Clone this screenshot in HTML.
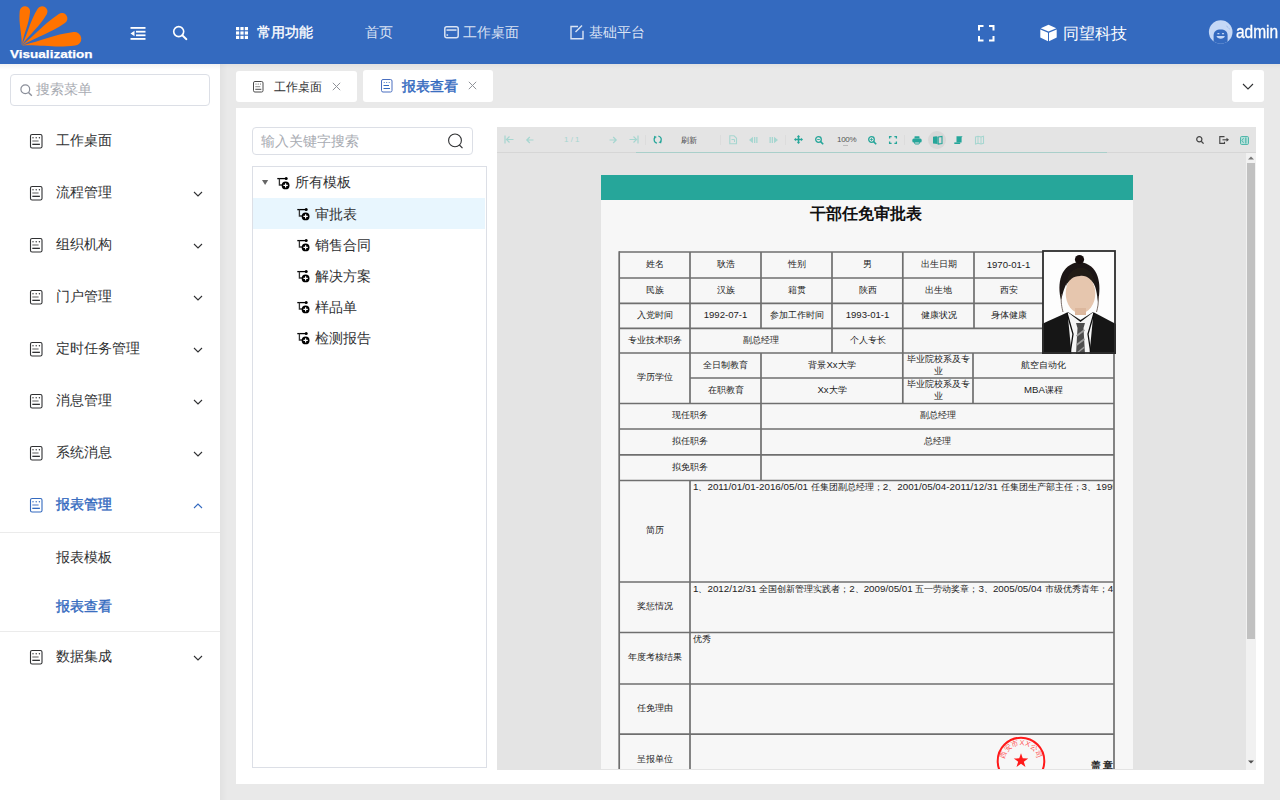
<!DOCTYPE html>
<html><head><meta charset="utf-8">
<style>
html,body{margin:0;padding:0}
body{width:1280px;height:800px;overflow:hidden;position:relative;background:#e9e9e9;font-family:"Liberation Sans",sans-serif;color:#303133}
.a{position:absolute}
.t{position:absolute;white-space:nowrap;line-height:1}
svg{position:absolute;overflow:visible}
#hdr{left:0;top:0;width:1280px;height:64px;background:#346abf}
#hdr .t{color:rgba(255,255,255,.82);font-size:14px}
#side{left:0;top:64px;width:220px;height:736px;background:#fff}
#side .mi{font-size:14px;color:#303133}
#tabs .t{font-size:13px}
#panel{left:236px;top:108px;width:1028px;height:676px;background:#fff}
</style></head><body>

<!-- HEADER -->
<div id="hdr" class="a">
<!--LOGO-->
<svg width="100" height="64" style="left:0;top:0">
  <g fill="#ff7300">
<path transform="translate(21.8 45.4) rotate(-84.79)" d="M0 0 C13.66 1.19 20.48 5.2 34.14 5.2 A5.2 5.2 0 0 0 34.14 -5.2 C20.48 -5.2 13.66 -1.19 0 0 Z"/>
<path transform="translate(21.8 45.4) rotate(-58.89)" d="M0 0 C15.79 1.38 23.69 5.3 39.48 5.3 A5.3 5.3 0 0 0 39.48 -5.3 C23.69 -5.3 15.79 -1.38 0 0 Z"/>
<path transform="translate(21.8 45.4) rotate(-33.85)" d="M0 0 C19.31 1.69 28.97 5.5 48.29 5.5 A5.5 5.5 0 0 0 48.29 -5.5 C28.97 -5.5 19.31 -1.69 0 0 Z"/>
<path transform="translate(21.8 45.4) rotate(-7.14)" d="M0 0 C21.24 1.86 31.87 6.8 53.11 6.8 A6.8 6.8 0 0 0 53.11 -6.8 C31.87 -6.8 21.24 -1.86 0 0 Z"/>
</g>
  <text x="10" y="58.4" font-family="Liberation Sans" font-weight="bold" font-size="11.8" fill="#fff" stroke="#fff" stroke-width="0.25" textLength="82.5" lengthAdjust="spacingAndGlyphs">Visualization</text>
</svg>
<!--menu fold icon-->
<svg width="16" height="14" style="left:130px;top:26px">
  <g fill="#fff">
    <rect x="0.5" y="1" width="15" height="1.8"/>
    <rect x="6" y="4.8" width="9.5" height="1.8"/>
    <rect x="6" y="8.4" width="9.5" height="1.8"/>
    <rect x="0.5" y="12" width="15" height="1.8"/>
    <path d="M0.5 7.5 L4.5 4.8 L4.5 10.2 Z"/>
  </g>
</svg>
<!--search icon-->
<svg width="16" height="16" style="left:172px;top:25px">
  <circle cx="6.7" cy="6.6" r="5" fill="none" stroke="#fff" stroke-width="1.6"/>
  <path d="M10.3 10.3 L14.4 14.2" stroke="#fff" stroke-width="1.9" stroke-linecap="round"/>
</svg>
<!--grid icon-->
<svg width="13" height="13" style="left:236px;top:27px">
  <g fill="#fff">
    <rect x="0" y="0" width="3.2" height="3.2"/><rect x="4.4" y="0" width="3.2" height="3.2"/><rect x="8.8" y="0" width="3.2" height="3.2"/>
    <rect x="0" y="4.4" width="3.2" height="3.2"/><rect x="4.4" y="4.4" width="3.2" height="3.2"/><rect x="8.8" y="4.4" width="3.2" height="3.2"/>
    <rect x="0" y="8.8" width="3.2" height="3.2"/><rect x="4.4" y="8.8" width="3.2" height="3.2"/><rect x="8.8" y="8.8" width="3.2" height="3.2"/>
  </g>
</svg>
<div class="t" style="left:257px;top:25px;color:#fff;-webkit-text-stroke:0.35px #fff">常用功能</div>
<div class="t" style="left:365px;top:25px">首页</div>
<svg width="15" height="13" style="left:444px;top:26px">
  <rect x="0.8" y="0.8" width="13.4" height="11" rx="2" fill="none" stroke="rgba(255,255,255,.82)" stroke-width="1.5"/>
  <rect x="2.5" y="3.3" width="10" height="1.5" fill="rgba(255,255,255,.82)"/>
  <rect x="2.5" y="8.3" width="1.6" height="1.5" fill="rgba(255,255,255,.82)"/>
</svg>
<div class="t" style="left:463px;top:25px">工作桌面</div>
<svg width="16" height="15" style="left:570px;top:25px">
  <path d="M8 1.5 H1 V13.8 H13 V5.8" fill="none" stroke="rgba(255,255,255,.82)" stroke-width="1.4"/>
  <path d="M5.5 7 L12 0.5" fill="none" stroke="rgba(255,255,255,.82)" stroke-width="1.4"/>
</svg>
<div class="t" style="left:589px;top:25px">基础平台</div>
<!--fullscreen-->
<svg width="17" height="17" style="left:978px;top:25px">
  <g fill="none" stroke="#fff" stroke-width="2">
    <path d="M1 5.5 V1 H5.5"/><path d="M11 1 H15.5 V5.5"/><path d="M15.5 11 V15.5 H11"/><path d="M5.5 15.5 H1 V11"/>
  </g>
</svg>
<!--cube-->
<svg width="18" height="18" style="left:1040px;top:24px">
  <path d="M8.5 0.8 L16.3 4.2 L8.5 7.6 L0.7 4.2 Z" fill="#fff"/>
  <path d="M0.3 5.4 L8 8.8 L8 17.2 L0.3 13.4 Z" fill="#fff"/>
  <path d="M16.7 5.4 L9 8.8 L9 17.2 L16.7 13.4 Z" fill="#fff"/>
</svg>
<div class="t" style="left:1063px;top:26px;font-size:16px;color:#fff">同望科技</div>
<!--avatar-->
<svg width="26" height="26" style="left:1208px;top:20px">
  <defs><clipPath id="avc"><circle cx="12.7" cy="12" r="11.8"/></clipPath></defs>
  <circle cx="12.7" cy="12" r="11.8" fill="#c5d8f6"/>
  <g clip-path="url(#avc)">
  <path d="M5.6 26 V15.5 C5.6 11.5 8.5 9.6 12.6 9.6 C16.7 9.6 19.6 11.5 19.6 15.5 V26 Z" fill="#346abf"/>
  </g>
  <rect x="9.3" y="13" width="2.2" height="1.3" rx=".6" fill="#c5d8f6"/>
  <rect x="13.9" y="13" width="2.2" height="1.3" rx=".6" fill="#c5d8f6"/>
  <path d="M8.5 16 C9.3 19.6 16.1 19.6 16.9 16 Z" fill="#c5d8f6"/>
  <path d="M18.6 6.2 L19.8 7.2 M20.6 8.2 L21.6 9" stroke="#8fb0e6" stroke-width="1"/>
</svg>
<div class="t" style="left:1236px;top:23px;font-size:18px;color:#fff;-webkit-text-stroke:0.3px #fff;transform:scaleX(.86);transform-origin:0 0">admin</div>
</div>

<!-- SIDEBAR -->
<div id="side" class="a"></div>
<div class="a" style="left:0;top:64px;width:220px;height:6px;background:linear-gradient(rgba(0,0,0,.05),rgba(0,0,0,0))"></div>
<div class="a" style="left:10px;top:74px;width:198px;height:30px;border:1px solid #dcdfe6;border-radius:4px;background:#fff"></div>
<svg width="13" height="13" style="left:20px;top:84px"><circle cx="5.3" cy="5.3" r="4.4" fill="none" stroke="#8a8e99" stroke-width="1.2"/><path d="M8.5 8.5 L11.8 11.8" stroke="#8a8e99" stroke-width="1.4"/></svg>
<div class="t" style="left:36px;top:82px;font-size:14px;color:#a8abb2">搜索菜单</div>
<svg width="13" height="15" style="left:30px;top:134px"><rect x="0.5" y="0.5" width="11.5" height="13.5" rx="1.6" fill="none" stroke="#303133" stroke-width="1.1"/><g fill="#303133"><circle cx="3" cy="3.8" r=".7"/><circle cx="6.2" cy="3.8" r=".7"/><circle cx="9.4" cy="3.8" r=".7"/></g><rect x="2.3" y="6.3" width="6.3" height="1.4" fill="#8a8a8a"/><rect x="2.3" y="9.7" width="7.6" height="1.3" fill="#303133"/></svg>
<div class="t" style="left:56px;top:133px;font-size:14px;color:#303133">工作桌面</div>
<svg width="13" height="15" style="left:30px;top:186px"><rect x="0.5" y="0.5" width="11.5" height="13.5" rx="1.6" fill="none" stroke="#303133" stroke-width="1.1"/><g fill="#303133"><circle cx="3" cy="3.8" r=".7"/><circle cx="6.2" cy="3.8" r=".7"/><circle cx="9.4" cy="3.8" r=".7"/></g><rect x="2.3" y="6.3" width="6.3" height="1.4" fill="#8a8a8a"/><rect x="2.3" y="9.7" width="7.6" height="1.3" fill="#303133"/></svg>
<div class="t" style="left:56px;top:185px;font-size:14px;color:#303133">流程管理</div>
<svg width="10" height="6" style="left:193px;top:191px"><path d="M1 1 L5 5 L9 1" fill="none" stroke="#303133" stroke-width="1.1"/></svg>
<svg width="13" height="15" style="left:30px;top:238px"><rect x="0.5" y="0.5" width="11.5" height="13.5" rx="1.6" fill="none" stroke="#303133" stroke-width="1.1"/><g fill="#303133"><circle cx="3" cy="3.8" r=".7"/><circle cx="6.2" cy="3.8" r=".7"/><circle cx="9.4" cy="3.8" r=".7"/></g><rect x="2.3" y="6.3" width="6.3" height="1.4" fill="#8a8a8a"/><rect x="2.3" y="9.7" width="7.6" height="1.3" fill="#303133"/></svg>
<div class="t" style="left:56px;top:237px;font-size:14px;color:#303133">组织机构</div>
<svg width="10" height="6" style="left:193px;top:243px"><path d="M1 1 L5 5 L9 1" fill="none" stroke="#303133" stroke-width="1.1"/></svg>
<svg width="13" height="15" style="left:30px;top:290px"><rect x="0.5" y="0.5" width="11.5" height="13.5" rx="1.6" fill="none" stroke="#303133" stroke-width="1.1"/><g fill="#303133"><circle cx="3" cy="3.8" r=".7"/><circle cx="6.2" cy="3.8" r=".7"/><circle cx="9.4" cy="3.8" r=".7"/></g><rect x="2.3" y="6.3" width="6.3" height="1.4" fill="#8a8a8a"/><rect x="2.3" y="9.7" width="7.6" height="1.3" fill="#303133"/></svg>
<div class="t" style="left:56px;top:289px;font-size:14px;color:#303133">门户管理</div>
<svg width="10" height="6" style="left:193px;top:295px"><path d="M1 1 L5 5 L9 1" fill="none" stroke="#303133" stroke-width="1.1"/></svg>
<svg width="13" height="15" style="left:30px;top:342px"><rect x="0.5" y="0.5" width="11.5" height="13.5" rx="1.6" fill="none" stroke="#303133" stroke-width="1.1"/><g fill="#303133"><circle cx="3" cy="3.8" r=".7"/><circle cx="6.2" cy="3.8" r=".7"/><circle cx="9.4" cy="3.8" r=".7"/></g><rect x="2.3" y="6.3" width="6.3" height="1.4" fill="#8a8a8a"/><rect x="2.3" y="9.7" width="7.6" height="1.3" fill="#303133"/></svg>
<div class="t" style="left:56px;top:341px;font-size:14px;color:#303133">定时任务管理</div>
<svg width="10" height="6" style="left:193px;top:347px"><path d="M1 1 L5 5 L9 1" fill="none" stroke="#303133" stroke-width="1.1"/></svg>
<svg width="13" height="15" style="left:30px;top:394px"><rect x="0.5" y="0.5" width="11.5" height="13.5" rx="1.6" fill="none" stroke="#303133" stroke-width="1.1"/><g fill="#303133"><circle cx="3" cy="3.8" r=".7"/><circle cx="6.2" cy="3.8" r=".7"/><circle cx="9.4" cy="3.8" r=".7"/></g><rect x="2.3" y="6.3" width="6.3" height="1.4" fill="#8a8a8a"/><rect x="2.3" y="9.7" width="7.6" height="1.3" fill="#303133"/></svg>
<div class="t" style="left:56px;top:393px;font-size:14px;color:#303133">消息管理</div>
<svg width="10" height="6" style="left:193px;top:399px"><path d="M1 1 L5 5 L9 1" fill="none" stroke="#303133" stroke-width="1.1"/></svg>
<svg width="13" height="15" style="left:30px;top:446px"><rect x="0.5" y="0.5" width="11.5" height="13.5" rx="1.6" fill="none" stroke="#303133" stroke-width="1.1"/><g fill="#303133"><circle cx="3" cy="3.8" r=".7"/><circle cx="6.2" cy="3.8" r=".7"/><circle cx="9.4" cy="3.8" r=".7"/></g><rect x="2.3" y="6.3" width="6.3" height="1.4" fill="#8a8a8a"/><rect x="2.3" y="9.7" width="7.6" height="1.3" fill="#303133"/></svg>
<div class="t" style="left:56px;top:445px;font-size:14px;color:#303133">系统消息</div>
<svg width="10" height="6" style="left:193px;top:451px"><path d="M1 1 L5 5 L9 1" fill="none" stroke="#303133" stroke-width="1.1"/></svg>
<svg width="13" height="15" style="left:30px;top:498px"><rect x="0.5" y="0.5" width="11.5" height="13.5" rx="1.6" fill="none" stroke="#346abf" stroke-width="1.1"/><g fill="#346abf"><circle cx="3" cy="3.8" r=".7"/><circle cx="6.2" cy="3.8" r=".7"/><circle cx="9.4" cy="3.8" r=".7"/></g><rect x="2.3" y="6.3" width="6.3" height="1.4" fill="#7f9fd8"/><rect x="2.3" y="9.7" width="7.6" height="1.3" fill="#346abf"/></svg>
<div class="t" style="left:56px;top:497px;font-size:14px;color:#346abf;-webkit-text-stroke:0.4px #346abf">报表管理</div>
<svg width="10" height="6" style="left:193px;top:503px"><path d="M1 5 L5 1 L9 5" fill="none" stroke="#346abf" stroke-width="1.1"/></svg>
<div class="a" style="left:0;top:532px;width:220px;height:1px;background:#ebebeb"></div>
<div class="a" style="left:0;top:631px;width:220px;height:1px;background:#ebebeb"></div>
<div class="t" style="left:56px;top:550px;font-size:14px;color:#303133">报表模板</div>
<div class="t" style="left:56px;top:599px;font-size:14px;color:#346abf;-webkit-text-stroke:0.4px #346abf">报表查看</div>
<svg width="13" height="15" style="left:30px;top:650px"><rect x="0.5" y="0.5" width="11.5" height="13.5" rx="1.6" fill="none" stroke="#303133" stroke-width="1.1"/><g fill="#303133"><circle cx="3" cy="3.8" r=".7"/><circle cx="6.2" cy="3.8" r=".7"/><circle cx="9.4" cy="3.8" r=".7"/></g><rect x="2.3" y="6.3" width="6.3" height="1.4" fill="#8a8a8a"/><rect x="2.3" y="9.7" width="7.6" height="1.3" fill="#303133"/></svg>
<div class="t" style="left:56px;top:649px;font-size:14px;color:#303133">数据集成</div>
<svg width="10" height="6" style="left:193px;top:655px"><path d="M1 1 L5 5 L9 1" fill="none" stroke="#303133" stroke-width="1.1"/></svg>

<!-- TABS -->
<div class="a" style="left:220px;top:64px;width:1060px;height:5px;background:linear-gradient(rgba(0,0,0,.035),rgba(0,0,0,0))"></div>
<div class="a" style="left:220px;top:64px;width:8px;height:736px;background:linear-gradient(90deg,rgba(0,0,0,.03),rgba(0,0,0,0))"></div>
<div class="a" style="left:236px;top:71px;width:121px;height:31px;background:#fff;border-radius:3px"></div>
<svg width="11" height="12" style="left:253px;top:81px"><rect x="0.5" y="0.5" width="9.5" height="10.5" rx="1.4" fill="none" stroke="#4a4a4a" stroke-width="1"/><g fill="#4a4a4a"><circle cx="3" cy="3" r=".55"/><circle cx="5.2" cy="3" r=".55"/><circle cx="7.4" cy="3" r=".55"/></g><rect x="2.3" y="5.2" width="5" height="1" fill="#8a8a8a"/><rect x="2.3" y="7.8" width="6" height="1" fill="#4a4a4a"/></svg>
<div class="t" style="left:274px;top:81px;font-size:12px;color:#303133">工作桌面</div>
<svg width="10" height="10" style="left:332px;top:82px"><path d="M0.8 0.8 L8.2 8.2 M8.2 0.8 L0.8 8.2" stroke="#909399" stroke-width="1"/></svg>
<div class="a" style="left:363px;top:70px;width:130px;height:32px;background:#fff;border-radius:3px"></div>
<svg width="12" height="14" style="left:381px;top:79px"><rect x="0.5" y="0.5" width="10.5" height="12.5" rx="1.5" fill="none" stroke="#4a6fc0" stroke-width="1"/><g fill="#346abf"><circle cx="3.2" cy="3.5" r=".6"/><circle cx="5.7" cy="3.5" r=".6"/><circle cx="8.2" cy="3.5" r=".6"/></g><rect x="2.5" y="6" width="5.5" height="1" fill="#346abf"/><rect x="2.5" y="9" width="6.5" height="1" fill="#346abf"/></svg>
<div class="t" style="left:402px;top:79px;font-size:14px;color:#346abf;-webkit-text-stroke:0.45px #346abf">报表查看</div>
<svg width="10" height="10" style="left:468px;top:81px"><path d="M0.8 0.8 L8.2 8.2 M8.2 0.8 L0.8 8.2" stroke="#909399" stroke-width="1"/></svg>
<div class="a" style="left:1232px;top:70px;width:32px;height:32px;background:#fff;border-radius:3px"></div>
<svg width="12" height="7" style="left:1242px;top:83px"><path d="M1 1 L6 6 L11 1" fill="none" stroke="#303133" stroke-width="1.1"/></svg>

<!-- PANEL -->
<div id="panel" class="a"></div>
<div class="a" style="left:252px;top:127px;width:219px;height:26px;border:1px solid #dcdfe6;border-radius:4px;background:#fff"></div>
<div class="t" style="left:261px;top:134px;font-size:14px;color:#a8abb2">输入关键字搜索</div>
<svg width="17" height="17" style="left:447px;top:133px"><circle cx="8" cy="7.4" r="6.4" fill="none" stroke="#303133" stroke-width="1.1"/><path d="M12.4 12 L15.5 15.2" stroke="#303133" stroke-width="1.1"/></svg>
<div class="a" style="left:252px;top:166px;width:233px;height:600px;border:1px solid #dcdfe6;background:#fff"></div>
<div class="a" style="left:253px;top:198px;width:232px;height:31px;background:#e8f6fe"></div>
<svg width="8" height="6" style="left:261px;top:179px"><path d="M1 1 H7.2 L4.1 6 Z" fill="#666"/></svg>
<svg width="13" height="13" style="left:277px;top:177px"><path d="M0.3 1.6 H8.6" stroke="#000" stroke-width="1.3"/><circle cx="9.2" cy="1.6" r="1.5" fill="#000"/><path d="M2.4 1.6 V8 H6" fill="none" stroke="#333" stroke-width="1.3"/><circle cx="8.6" cy="8.4" r="3.9" fill="#000"/><path d="M8.6 6.2 V10.6 M6.4 8.4 H10.8" stroke="#fff" stroke-width="1.2"/></svg>
<div class="t" style="left:295px;top:175px;font-size:14px;color:#303133">所有模板</div>
<svg width="13" height="13" style="left:297px;top:208px"><path d="M0.3 1.6 H8.6" stroke="#000" stroke-width="1.3"/><circle cx="9.2" cy="1.6" r="1.5" fill="#000"/><path d="M2.4 1.6 V8 H6" fill="none" stroke="#333" stroke-width="1.3"/><circle cx="8.6" cy="8.4" r="3.9" fill="#000"/><path d="M8.6 6.2 V10.6 M6.4 8.4 H10.8" stroke="#fff" stroke-width="1.2"/></svg>
<div class="t" style="left:315px;top:207px;font-size:14px;color:#303133">审批表</div>
<svg width="13" height="13" style="left:297px;top:239px"><path d="M0.3 1.6 H8.6" stroke="#000" stroke-width="1.3"/><circle cx="9.2" cy="1.6" r="1.5" fill="#000"/><path d="M2.4 1.6 V8 H6" fill="none" stroke="#333" stroke-width="1.3"/><circle cx="8.6" cy="8.4" r="3.9" fill="#000"/><path d="M8.6 6.2 V10.6 M6.4 8.4 H10.8" stroke="#fff" stroke-width="1.2"/></svg>
<div class="t" style="left:315px;top:238px;font-size:14px;color:#303133">销售合同</div>
<svg width="13" height="13" style="left:297px;top:270px"><path d="M0.3 1.6 H8.6" stroke="#000" stroke-width="1.3"/><circle cx="9.2" cy="1.6" r="1.5" fill="#000"/><path d="M2.4 1.6 V8 H6" fill="none" stroke="#333" stroke-width="1.3"/><circle cx="8.6" cy="8.4" r="3.9" fill="#000"/><path d="M8.6 6.2 V10.6 M6.4 8.4 H10.8" stroke="#fff" stroke-width="1.2"/></svg>
<div class="t" style="left:315px;top:269px;font-size:14px;color:#303133">解决方案</div>
<svg width="13" height="13" style="left:297px;top:301px"><path d="M0.3 1.6 H8.6" stroke="#000" stroke-width="1.3"/><circle cx="9.2" cy="1.6" r="1.5" fill="#000"/><path d="M2.4 1.6 V8 H6" fill="none" stroke="#333" stroke-width="1.3"/><circle cx="8.6" cy="8.4" r="3.9" fill="#000"/><path d="M8.6 6.2 V10.6 M6.4 8.4 H10.8" stroke="#fff" stroke-width="1.2"/></svg>
<div class="t" style="left:315px;top:300px;font-size:14px;color:#303133">样品单</div>
<svg width="13" height="13" style="left:297px;top:332px"><path d="M0.3 1.6 H8.6" stroke="#000" stroke-width="1.3"/><circle cx="9.2" cy="1.6" r="1.5" fill="#000"/><path d="M2.4 1.6 V8 H6" fill="none" stroke="#333" stroke-width="1.3"/><circle cx="8.6" cy="8.4" r="3.9" fill="#000"/><path d="M8.6 6.2 V10.6 M6.4 8.4 H10.8" stroke="#fff" stroke-width="1.2"/></svg>
<div class="t" style="left:315px;top:331px;font-size:14px;color:#303133">检测报告</div>
<!--VIEWER-->
<div class="a" style="left:497px;top:127px;width:759px;height:643px;background:#e4e4e4"></div>
<div class="a" style="left:497px;top:152px;width:759px;height:1px;background:#d6d6d6"></div>
<div class="a" style="left:636px;top:152px;width:471px;height:1px;background:#a9cfca"></div>
<svg width="10" height="10" style="left:504px;top:135px"><path d="M1 0.5 V8.5 M2.5 4.5 H9.5 M5.5 1.5 L2.5 4.5 L5.5 7.5" fill="none" stroke="#a6d6d0" stroke-width="1.2"/></svg>
<svg width="8" height="8" style="left:526px;top:136px"><path d="M0.8 4 H7.5 M3.8 1 L0.8 4 L3.8 7" fill="none" stroke="#a6d6d0" stroke-width="1.2"/></svg>
<div class="t" style="left:564px;top:136px;font-size:8px;color:#a6d6d0">1 / 1</div>
<svg width="8" height="8" style="left:609px;top:136px"><path d="M0.5 4 H7.2 M4.2 1 L7.2 4 L4.2 7" fill="none" stroke="#a6d6d0" stroke-width="1.2"/></svg>
<svg width="10" height="10" style="left:629px;top:135px"><path d="M9 0.5 V8.5 M0.5 4.5 H7.5 M4.5 1.5 L7.5 4.5 L4.5 7.5" fill="none" stroke="#a6d6d0" stroke-width="1.2"/></svg>
<div class="a" style="left:645px;top:135px;width:1px;height:10px;background:#dcdcdc"></div>
<div class="a" style="left:720px;top:135px;width:1px;height:10px;background:#dcdcdc"></div>
<div class="a" style="left:785px;top:135px;width:1px;height:10px;background:#dcdcdc"></div>
<div class="a" style="left:904px;top:135px;width:1px;height:10px;background:#dcdcdc"></div>
<svg width="10" height="10" style="left:653px;top:135px"><g transform="rotate(80 4.8 4.6)"><path d="M7.4 2.4 A3.5 3.5 0 0 0 1.4 3.4" fill="none" stroke="#26a69a" stroke-width="1.3"/><path d="M2.2 7.0 A3.5 3.5 0 0 0 8.2 6.0" fill="none" stroke="#26a69a" stroke-width="1.3"/><path d="M6.4 0.9 L9.2 2.0 L7.4 4.4 Z M3.2 8.5 L0.4 7.4 L2.2 5.0 Z" fill="#26a69a"/></g></svg>
<div class="t" style="left:681px;top:137px;font-size:7.5px;color:#444">刷新</div>
<svg width="9" height="10" style="left:729px;top:135px"><path d="M0.8 0.8 H5 L7.5 3.2 V8.8 H0.8 Z" fill="none" stroke="#a6d6d0" stroke-width="1.1"/><path d="M2.5 4.5 H5.5 V7" fill="none" stroke="#a6d6d0" stroke-width="1"/></svg>
<svg width="9" height="8" style="left:749px;top:136px"><path d="M0 4 L4 0.8 V7.2 Z" fill="#a6d6d0"/><rect x="5" y="1" width="1.3" height="6" fill="#a6d6d0"/><rect x="7.2" y="1" width="1.3" height="6" fill="#a6d6d0"/></svg>
<svg width="9" height="8" style="left:769px;top:136px"><path d="M9 4 L5 0.8 V7.2 Z" fill="#a6d6d0"/><rect x="0.5" y="1" width="1.3" height="6" fill="#a6d6d0"/><rect x="2.7" y="1" width="1.3" height="6" fill="#a6d6d0"/></svg>
<svg width="9" height="9" style="left:794px;top:135px"><path d="M4.5 1 V8 M1 4.5 H8" stroke="#26a69a" stroke-width="1.6"/><path d="M4.5 0 L6.2 1.8 H2.8 Z M4.5 9 L6.2 7.2 H2.8 Z M0 4.5 L1.8 2.8 V6.2 Z M9 4.5 L7.2 2.8 V6.2 Z" fill="#26a69a"/></svg>
<svg width="9" height="9" style="left:815px;top:136px"><circle cx="3.5" cy="3.5" r="2.8" fill="none" stroke="#26a69a" stroke-width="1.3"/><path d="M5.6 5.6 L8.2 8.2" stroke="#26a69a" stroke-width="1.6"/><path d="M2.2 3.5 H4.8" stroke="#26a69a" stroke-width=".9"/></svg>
<div class="t" style="left:837px;top:136px;font-size:8px;color:#555;letter-spacing:-0.3px">100%</div>
<div class="a" style="left:843px;top:145px;width:5px;height:1px;background:#bbb"></div>
<svg width="9" height="9" style="left:868px;top:136px"><circle cx="3.5" cy="3.5" r="2.8" fill="none" stroke="#26a69a" stroke-width="1.3"/><path d="M5.6 5.6 L8.2 8.2" stroke="#26a69a" stroke-width="1.6"/><path d="M3.5 2.2 V4.8 M2.2 3.5 H4.8" stroke="#26a69a" stroke-width=".9"/></svg>
<svg width="8" height="8" style="left:889px;top:136px"><path d="M0.6 2.6 V0.6 H2.6 M5.4 0.6 H7.4 V2.6 M7.4 5.4 V7.4 H5.4 M2.6 7.4 H0.6 V5.4" fill="none" stroke="#26a69a" stroke-width="1.3"/></svg>
<svg width="10" height="9" style="left:912px;top:135.5px"><rect x="2.5" y="0.3" width="5" height="2.3" rx=".5" fill="#26a69a"/><rect x="0.3" y="2.6" width="9.4" height="4" rx="1.6" fill="#26a69a"/><rect x="2.6" y="5.2" width="4.8" height="2.8" rx="1" fill="none" stroke="#26a69a" stroke-width="1"/></svg>
<div class="a" style="left:928px;top:131px;width:18px;height:18px;border-radius:9px;background:#d8d8d8"></div>
<svg width="10" height="8" style="left:933px;top:136px"><path d="M0 0.8 L3.5 0.3 L4.6 1 V8 L0 7.5 Z" fill="#26a69a"/><path d="M5.2 1 L9 0.5 V7.5 L5.2 8 Z" fill="none" stroke="#26a69a" stroke-width="1.1"/></svg>
<svg width="9" height="8" style="left:954px;top:136px"><path d="M2.5 0.3 H8.6 L7.6 1.6 V6.6 H2.5 Z" fill="#26a69a"/><path d="M0.3 6.4 H6.2 V8 H0.3 Z" fill="#26a69a"/></svg>
<svg width="9" height="8" style="left:975px;top:136px"><path d="M0.5 1 L3 0.3 L6 1 L8.5 0.3 V7.3 L6 8 L3 7.3 L0.5 8 Z" fill="none" stroke="#a6d6d0" stroke-width="1.1"/><path d="M3 0.3 V7.3 M6 1 V8" stroke="#a6d6d0" stroke-width="1"/></svg>
<svg width="8" height="8" style="left:1196px;top:136px"><circle cx="3.3" cy="3.3" r="2.6" fill="none" stroke="#444" stroke-width="1.2"/><path d="M5.2 5.2 L7.6 7.6" stroke="#444" stroke-width="1.3"/></svg>
<svg width="10" height="8" style="left:1219px;top:136px"><path d="M5.5 0.6 H0.8 V7.4 H5.5 V5.8" fill="none" stroke="#444" stroke-width="1.1"/><path d="M3.5 3.8 H8.5" stroke="#444" stroke-width="1.1"/><path d="M10 3.8 L7.5 1.8 V5.8 Z" fill="#444"/></svg>
<svg width="9" height="9" style="left:1240px;top:135.5px"><rect x="0.5" y="0.5" width="8" height="8" rx="1.2" fill="#b4e0da" stroke="#52b7ab" stroke-width="1"/><path d="M3.6 2.2 L1.9 4.5 L3.6 6.8" fill="none" stroke="#52b7ab" stroke-width="1"/><rect x="5.2" y="1.5" width="1.2" height="6" fill="#52b7ab"/></svg>
<div class="a" style="left:1246px;top:153px;width:10px;height:617px;background:#f1f1f1"></div>
<div class="a" style="left:1247px;top:163px;width:8px;height:476px;background:#c1c1c1"></div>
<svg width="6" height="4" style="left:1248px;top:156px"><path d="M0 3.5 L3 0.5 L6 3.5 Z" fill="#777"/></svg>
<svg width="6" height="4" style="left:1248px;top:760px"><path d="M0 0.5 L3 3.5 L6 0.5 Z" fill="#505050"/></svg>
<div class="a" style="left:497px;top:153px;width:749px;height:616px;overflow:hidden"><div class="a" style="left:-497px;top:-153px;width:1280px;height:800px">
<div class="a" style="left:601px;top:175px;width:532px;height:700px;background:#f7f7f7"></div>
<div class="a" style="left:601px;top:175px;width:532px;height:25px;background:#26a69a"></div>
<div class="t" style="left:810px;top:206px;font-size:16px;font-weight:bold;color:#111">干部任免审批表</div>
<svg width="1280" height="800" style="left:0;top:0"><g fill="none" stroke="#6f6f6f" stroke-width="1.7"><path d="M619 252 H1043"/><path d="M619 278 H1043"/><path d="M619 303.4 H1043"/><path d="M619 328.4 H1043"/><path d="M619 353 H1114"/><path d="M690 378 H1114"/><path d="M619 403.5 H1114"/><path d="M619 429 H1114"/><path d="M619 454.8 H1114"/><path d="M619 480.5 H1114"/><path d="M619 582 H1114"/><path d="M619 632.5 H1114"/><path d="M619 684 H1114"/><path d="M619 734.2 H1114"/><path d="M619.2 251.2 V800"/><path d="M690 252 V403.5"/><path d="M690 480.5 V800"/><path d="M761 252 V328.4"/><path d="M761 353 V480.5"/><path d="M832 252 V353"/><path d="M902.8 252 V403.5"/><path d="M974 252 V328.4"/><path d="M973 353 V403.5"/><path d="M1114 353 V800"/></g></svg>
<div class="a" style="left:619px;top:252px;width:71px;height:26px;display:flex;align-items:center;justify-content:center;text-align:center;font-size:9.6px;line-height:11px;color:#1c1c1c;"><span style="position:relative;top:-1px"><span style="font-size:9px">姓名</span></span></div>
<div class="a" style="left:690px;top:252px;width:71px;height:26px;display:flex;align-items:center;justify-content:center;text-align:center;font-size:9.6px;line-height:11px;color:#1c1c1c;"><span style="position:relative;top:-1px"><span style="font-size:9px">耿浩</span></span></div>
<div class="a" style="left:761px;top:252px;width:71px;height:26px;display:flex;align-items:center;justify-content:center;text-align:center;font-size:9.6px;line-height:11px;color:#1c1c1c;"><span style="position:relative;top:-1px"><span style="font-size:9px">性别</span></span></div>
<div class="a" style="left:832px;top:252px;width:71px;height:26px;display:flex;align-items:center;justify-content:center;text-align:center;font-size:9.6px;line-height:11px;color:#1c1c1c;"><span style="position:relative;top:-1px"><span style="font-size:9px">男</span></span></div>
<div class="a" style="left:903px;top:252px;width:71px;height:26px;display:flex;align-items:center;justify-content:center;text-align:center;font-size:9.6px;line-height:11px;color:#1c1c1c;"><span style="position:relative;top:-1px"><span style="font-size:9px">出生日期</span></span></div>
<div class="a" style="left:974px;top:252px;width:69px;height:26px;display:flex;align-items:center;justify-content:center;text-align:center;font-size:9.6px;line-height:11px;color:#1c1c1c;"><span style="position:relative;top:-1px">1970-01-1</span></div>
<div class="a" style="left:619px;top:278px;width:71px;height:25.399999999999977px;display:flex;align-items:center;justify-content:center;text-align:center;font-size:9.6px;line-height:11px;color:#1c1c1c;"><span style="position:relative;top:-1px"><span style="font-size:9px">民族</span></span></div>
<div class="a" style="left:690px;top:278px;width:71px;height:25.399999999999977px;display:flex;align-items:center;justify-content:center;text-align:center;font-size:9.6px;line-height:11px;color:#1c1c1c;"><span style="position:relative;top:-1px"><span style="font-size:9px">汉族</span></span></div>
<div class="a" style="left:761px;top:278px;width:71px;height:25.399999999999977px;display:flex;align-items:center;justify-content:center;text-align:center;font-size:9.6px;line-height:11px;color:#1c1c1c;"><span style="position:relative;top:-1px"><span style="font-size:9px">籍贯</span></span></div>
<div class="a" style="left:832px;top:278px;width:71px;height:25.399999999999977px;display:flex;align-items:center;justify-content:center;text-align:center;font-size:9.6px;line-height:11px;color:#1c1c1c;"><span style="position:relative;top:-1px"><span style="font-size:9px">陕西</span></span></div>
<div class="a" style="left:903px;top:278px;width:71px;height:25.399999999999977px;display:flex;align-items:center;justify-content:center;text-align:center;font-size:9.6px;line-height:11px;color:#1c1c1c;"><span style="position:relative;top:-1px"><span style="font-size:9px">出生地</span></span></div>
<div class="a" style="left:974px;top:278px;width:69px;height:25.399999999999977px;display:flex;align-items:center;justify-content:center;text-align:center;font-size:9.6px;line-height:11px;color:#1c1c1c;"><span style="position:relative;top:-1px"><span style="font-size:9px">西安</span></span></div>
<div class="a" style="left:619px;top:303.4px;width:71px;height:25.0px;display:flex;align-items:center;justify-content:center;text-align:center;font-size:9.6px;line-height:11px;color:#1c1c1c;"><span style="position:relative;top:-1px"><span style="font-size:9px">入党时间</span></span></div>
<div class="a" style="left:690px;top:303.4px;width:71px;height:25.0px;display:flex;align-items:center;justify-content:center;text-align:center;font-size:9.6px;line-height:11px;color:#1c1c1c;"><span style="position:relative;top:-1px">1992-07-1</span></div>
<div class="a" style="left:761px;top:303.4px;width:71px;height:25.0px;display:flex;align-items:center;justify-content:center;text-align:center;font-size:9.6px;line-height:11px;color:#1c1c1c;"><span style="position:relative;top:-1px"><span style="font-size:9px">参加工作时间</span></span></div>
<div class="a" style="left:832px;top:303.4px;width:71px;height:25.0px;display:flex;align-items:center;justify-content:center;text-align:center;font-size:9.6px;line-height:11px;color:#1c1c1c;"><span style="position:relative;top:-1px">1993-01-1</span></div>
<div class="a" style="left:903px;top:303.4px;width:71px;height:25.0px;display:flex;align-items:center;justify-content:center;text-align:center;font-size:9.6px;line-height:11px;color:#1c1c1c;"><span style="position:relative;top:-1px"><span style="font-size:9px">健康状况</span></span></div>
<div class="a" style="left:974px;top:303.4px;width:69px;height:25.0px;display:flex;align-items:center;justify-content:center;text-align:center;font-size:9.6px;line-height:11px;color:#1c1c1c;"><span style="position:relative;top:-1px"><span style="font-size:9px">身体健康</span></span></div>
<div class="a" style="left:619px;top:328.4px;width:71px;height:24.600000000000023px;display:flex;align-items:center;justify-content:center;text-align:center;font-size:9.6px;line-height:11px;color:#1c1c1c;"><span style="position:relative;top:-1px"><span style="font-size:9px">专业技术职务</span></span></div>
<div class="a" style="left:690px;top:328.4px;width:142px;height:24.600000000000023px;display:flex;align-items:center;justify-content:center;text-align:center;font-size:9.6px;line-height:11px;color:#1c1c1c;"><span style="position:relative;top:-1px"><span style="font-size:9px">副总经理</span></span></div>
<div class="a" style="left:832px;top:328.4px;width:71px;height:24.600000000000023px;display:flex;align-items:center;justify-content:center;text-align:center;font-size:9.6px;line-height:11px;color:#1c1c1c;"><span style="position:relative;top:-1px"><span style="font-size:9px">个人专长</span></span></div>
<div class="a" style="left:619px;top:353px;width:71px;height:50.5px;display:flex;align-items:center;justify-content:center;text-align:center;font-size:9.6px;line-height:11px;color:#1c1c1c;"><span style="position:relative;top:-1px"><span style="font-size:9px">学历学位</span></span></div>
<div class="a" style="left:690px;top:353px;width:71px;height:25px;display:flex;align-items:center;justify-content:center;text-align:center;font-size:9.6px;line-height:11px;color:#1c1c1c;"><span style="position:relative;top:-1px"><span style="font-size:9px">全日制教育</span></span></div>
<div class="a" style="left:761px;top:353px;width:142px;height:25px;display:flex;align-items:center;justify-content:center;text-align:center;font-size:9.6px;line-height:11px;color:#1c1c1c;"><span style="position:relative;top:-1px"><span style="font-size:9px">背景</span>Xx<span style="font-size:9px">大学</span></span></div>
<div class="a" style="left:903px;top:353px;width:70px;height:25px;display:flex;align-items:center;justify-content:center;text-align:center;font-size:9.6px;line-height:11px;color:#1c1c1c;padding:0 1px;box-sizing:border-box"><span style="position:relative;top:-1px"><span style="font-size:9px">毕业院校系及专业</span></span></div>
<div class="a" style="left:973px;top:353px;width:141px;height:25px;display:flex;align-items:center;justify-content:center;text-align:center;font-size:9.6px;line-height:11px;color:#1c1c1c;"><span style="position:relative;top:-1px"><span style="font-size:9px">航空自动化</span></span></div>
<div class="a" style="left:690px;top:378px;width:71px;height:25.5px;display:flex;align-items:center;justify-content:center;text-align:center;font-size:9.6px;line-height:11px;color:#1c1c1c;"><span style="position:relative;top:-1px"><span style="font-size:9px">在职教育</span></span></div>
<div class="a" style="left:761px;top:378px;width:142px;height:25.5px;display:flex;align-items:center;justify-content:center;text-align:center;font-size:9.6px;line-height:11px;color:#1c1c1c;"><span style="position:relative;top:-1px">Xx<span style="font-size:9px">大学</span></span></div>
<div class="a" style="left:903px;top:378px;width:70px;height:25.5px;display:flex;align-items:center;justify-content:center;text-align:center;font-size:9.6px;line-height:11px;color:#1c1c1c;padding:0 1px;box-sizing:border-box"><span style="position:relative;top:-1px"><span style="font-size:9px">毕业院校系及专业</span></span></div>
<div class="a" style="left:973px;top:378px;width:141px;height:25.5px;display:flex;align-items:center;justify-content:center;text-align:center;font-size:9.6px;line-height:11px;color:#1c1c1c;"><span style="position:relative;top:-1px">MBA<span style="font-size:9px">课程</span></span></div>
<div class="a" style="left:619px;top:403.5px;width:142px;height:25.5px;display:flex;align-items:center;justify-content:center;text-align:center;font-size:9.6px;line-height:11px;color:#1c1c1c;"><span style="position:relative;top:-1px"><span style="font-size:9px">现任职务</span></span></div>
<div class="a" style="left:761px;top:403.5px;width:353px;height:25.5px;display:flex;align-items:center;justify-content:center;text-align:center;font-size:9.6px;line-height:11px;color:#1c1c1c;"><span style="position:relative;top:-1px"><span style="font-size:9px">副总经理</span></span></div>
<div class="a" style="left:619px;top:429px;width:142px;height:25.80000000000001px;display:flex;align-items:center;justify-content:center;text-align:center;font-size:9.6px;line-height:11px;color:#1c1c1c;"><span style="position:relative;top:-1px"><span style="font-size:9px">拟任职务</span></span></div>
<div class="a" style="left:761px;top:429px;width:353px;height:25.80000000000001px;display:flex;align-items:center;justify-content:center;text-align:center;font-size:9.6px;line-height:11px;color:#1c1c1c;"><span style="position:relative;top:-1px"><span style="font-size:9px">总经理</span></span></div>
<div class="a" style="left:619px;top:454.8px;width:142px;height:25.69999999999999px;display:flex;align-items:center;justify-content:center;text-align:center;font-size:9.6px;line-height:11px;color:#1c1c1c;"><span style="position:relative;top:-1px"><span style="font-size:9px">拟免职务</span></span></div>
<div class="a" style="left:619px;top:480.5px;width:71px;height:101.5px;display:flex;align-items:center;justify-content:center;text-align:center;font-size:9.6px;line-height:11px;color:#1c1c1c;"><span style="position:relative;top:-1px"><span style="font-size:9px">简历</span></span></div>
<div class="a" style="left:619px;top:582px;width:71px;height:50.5px;display:flex;align-items:center;justify-content:center;text-align:center;font-size:9.6px;line-height:11px;color:#1c1c1c;"><span style="position:relative;top:-1px"><span style="font-size:9px">奖惩情况</span></span></div>
<div class="a" style="left:619px;top:632.5px;width:71px;height:51.5px;display:flex;align-items:center;justify-content:center;text-align:center;font-size:9.6px;line-height:11px;color:#1c1c1c;"><span style="position:relative;top:-1px"><span style="font-size:9px">年度考核结果</span></span></div>
<div class="a" style="left:619px;top:684px;width:71px;height:50.200000000000045px;display:flex;align-items:center;justify-content:center;text-align:center;font-size:9.6px;line-height:11px;color:#1c1c1c;"><span style="position:relative;top:-1px"><span style="font-size:9px">任免理由</span></span></div>
<div class="a" style="left:619px;top:734.2px;width:71px;height:51.799999999999955px;display:flex;align-items:center;justify-content:center;text-align:center;font-size:9.6px;line-height:11px;color:#1c1c1c;"><span style="position:relative;top:-1px"><span style="font-size:9px">呈报单位</span></span></div>
<div class="a" style="left:691px;top:481px;width:422px;height:14px;overflow:hidden"><div class="t" style="left:2px;top:1px;font-size:9.8px;color:#1c1c1c">1<span style="font-size:9px">、</span>2011/01/01-2016/05/01 <span style="font-size:9px">任集团副总经理；</span>2<span style="font-size:9px">、</span>2001/05/04-2011/12/31 <span style="font-size:9px">任集团生产部主任；</span>3<span style="font-size:9px">、</span>1995/01/01-2001/05/01 <span style="font-size:9px">任集团技术员</span></div></div>
<div class="a" style="left:691px;top:583px;width:422px;height:14px;overflow:hidden"><div class="t" style="left:2px;top:1px;font-size:9.8px;color:#1c1c1c">1<span style="font-size:9px">、</span>2012/12/31 <span style="font-size:9px">全国创新管理实践者；</span>2<span style="font-size:9px">、</span>2009/05/01 <span style="font-size:9px">五一劳动奖章；</span>3<span style="font-size:9px">、</span>2005/05/04 <span style="font-size:9px">市级优秀青年；</span>4<span style="font-size:9px">、</span>2001/01/01</div></div>
<div class="a" style="left:691px;top:633px;width:422px;height:14px;overflow:hidden"><div class="t" style="left:2px;top:1px;font-size:9.8px;color:#1c1c1c"><span style="font-size:9px">优秀</span></div></div>
<svg width="74" height="104" style="left:1042px;top:250px">
<defs><filter id="bl" x="-20%" y="-20%" width="140%" height="140%"><feGaussianBlur stdDeviation="0.6"/></filter></defs>
<rect x="1" y="1" width="72" height="102" fill="#fdfdfd"/>
<g filter="url(#bl)">
<path d="M19 50 C15 34 18 14 37.5 12 C57 14 60 34 56 52 C55 44 54 36 50 30 L27 30 C22 36 21 44 19 50 Z" fill="#1d1917"/>
<circle cx="37.5" cy="9.5" r="4.6" fill="#151110"/>
<path d="M19.5 44 C18.5 52 20 58 21 62 M56 46 C57 53 55.5 58 54.5 62" stroke="#5a4a42" stroke-width=".8" fill="none"/>
<ellipse cx="38.5" cy="43.5" rx="14.8" ry="19.8" fill="#e6c6ae"/>
<path d="M24 36 C25 24 31 18 38.5 18 C47 18 52 24 53 36 C50 30 45 25 38 26 C31 26 27 30 24 36 Z" fill="#231c19"/>
<rect x="33" y="58" width="11" height="7" fill="#dcb79d"/>
<path d="M0 74 C8 70 18 66 26 62 L38.5 70 L51 62 C59 66 66 70 74 74 V104 H0 Z" fill="#171717"/>
<path d="M25.5 62 L38.5 72 L51.5 62 L47.5 104 H29.5 Z" fill="#f5f5f5"/>
<path d="M34 73 H43 L41.5 78 L43 104 H34 L35.5 78 Z" fill="#4e4e4e"/>
<path d="M34.5 86 L42.5 80 M34.5 95 L42.5 89 M35 103 L42.5 97" stroke="#9c9c9c" stroke-width="1.6"/>
<path d="M25 63 L31 84 L28 104 M52 63 L46 84 L49 104" stroke="#0a0a0a" stroke-width="1.3" fill="none"/>
</g>
<rect x="1" y="1" width="72" height="102" fill="none" stroke="#2e2e2e" stroke-width="1.8"/>
</svg>
<svg width="52" height="52" style="left:995px;top:735px">
<circle cx="26" cy="26" r="23.3" fill="none" stroke="#ff1a1a" stroke-width="2"/>
<path d="M26.00 18.20 L27.76 23.37 L33.23 23.45 L28.85 26.73 L30.47 31.95 L26.00 28.80 L21.53 31.95 L23.15 26.73 L18.77 23.45 L24.24 23.37 Z" fill="#ff1a1a"/>
<defs><path id="arc" d="M10.5 34 A17 17 0 1 1 41.5 34"/></defs>
<text font-size="7.2" fill="#ff5050" font-family="Liberation Sans" letter-spacing="0.4"><textPath href="#arc" startOffset="50%" text-anchor="middle">西安市XX公司</textPath></text>
</svg>
<div class="t" style="left:1091px;top:761px;font-size:10px;font-weight:bold;color:#222;letter-spacing:2px">盖章</div>
</div></div>
</body></html>
